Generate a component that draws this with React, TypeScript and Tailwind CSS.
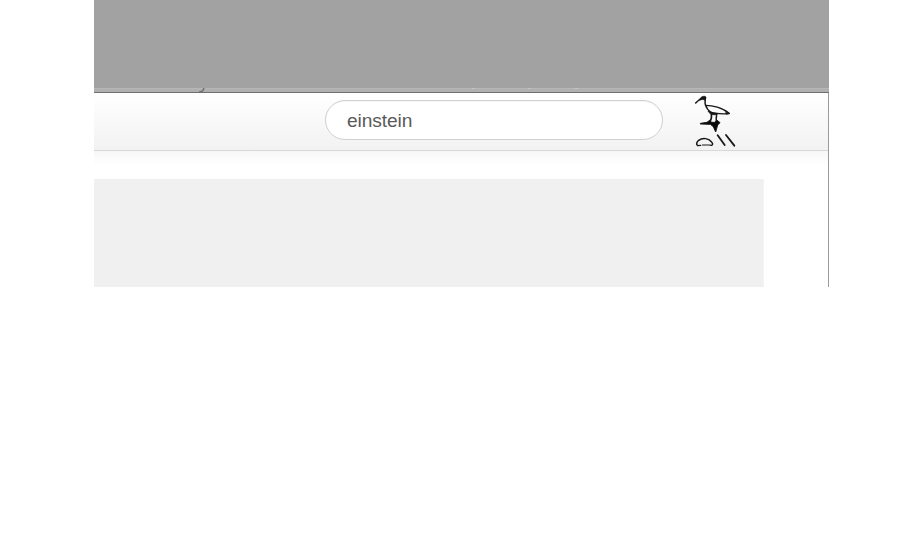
function BirdLogo() {
  return (
    <svg className="h-[58px] w-[50px] shrink-0" viewBox="0 0 150 174" fill="none" stroke="#181818" strokeLinecap="round" strokeLinejoin="round">
      <path d="M17 30 C22 24 28 20 36 17" strokeWidth="4.5" />
      <path d="M27 20 C33 12 38 9 44 10 L48 13 L46 22 C42 19 37 19 29 21 Z" fill="#111111" strokeWidth="2" />
      <path d="M46 13 C46 22 44 28 46 35 C49 45 55 53 64 60" strokeWidth="4.5" />
      <path d="M47 37 C66 37 98 44 117 61" strokeWidth="4" />
      <path d="M59 56 C75 64 96 63 117 62" strokeWidth="4" />
      <path d="M108 57 L119 61 L110 64 Z" fill="#222222" strokeWidth="2" />
      <path d="M55 55 L70 60 L82 62 L80 65 L64 65 Z" fill="#111111" strokeWidth="2" />
      <path d="M64 64 C66 74 63 82 58 89 M80 63 C78 75 78 83 80 90" strokeWidth="4.5" />
      <path d="M32 91 L51 88 L59 82 L65 88 L75 88 L80 81 L90 89 L83 96 L77 117 L70 101 L61 94 L32 93 Z" fill="#080808" strokeWidth="3" />
      <path d="M22 157 C18 153 21 147 26 142 C38 133 56 136 64 146 C69 151 69 155 65 157" strokeWidth="4.5" />
      <path d="M23 158 L32 157 M37 156 L58 156 L64 157" strokeWidth="3.5" />
      <path d="M83 127 L104 156 M108 126 L133 158" strokeWidth="5.5" />
    </svg>
  );
}

export default function App() {
  return (
    <main className="h-[560px] w-[924px] overflow-hidden bg-white pl-[94px]">
      <div className="w-[735px]">
        <div className="h-[88px] bg-[#a2a2a2]" />
        <div className="flex h-[5px] items-start border-b border-[#6f6f6f] bg-[#b0b0b0]">
          <svg className="h-1 w-full" viewBox="0 0 735 4" fill="none">
            <path d="M0 .5H735" stroke="#b7b7b7" />
            <path d="M105 4 Q109 4 110 0" stroke="#707070" strokeWidth="1.5" />
            <path d="M378 .5h3M434 .5h3M481 .5h3" stroke="#c5c5c5" />
          </svg>
        </div>
        <div className="h-[194px] border-r border-[#9b9b9b] bg-white">
          <header className="flex h-[58px] border-b border-[#d8d8d8] bg-linear-to-b from-white to-[#f2f2f2]">
            <input
              aria-label="Search"
              defaultValue="einstein"
              className="mt-[7px] ml-[231px] h-10 w-[338px] shrink-0 rounded-full border border-[#d0d0d0] bg-white px-[21px] pt-[2px] font-['Liberation_Sans',Arial,sans-serif] text-[19.2px] tracking-[-0.1px] text-[#5a5a5a] shadow-[inset_0_1px_1px_#00000009] outline-none"
            />
            <div className="ml-[27px] shrink-0">
              <BirdLogo />
            </div>
          </header>
          <div className="h-[14px] bg-linear-to-b from-[#f7f7f7] to-white" />
          <section className="mt-[14px] h-[108px] w-[670px] rounded-t-[1px] border-r border-[#f4f4f4] bg-[#f0f0f0]" />
        </div>
      </div>
    </main>
  );
}
